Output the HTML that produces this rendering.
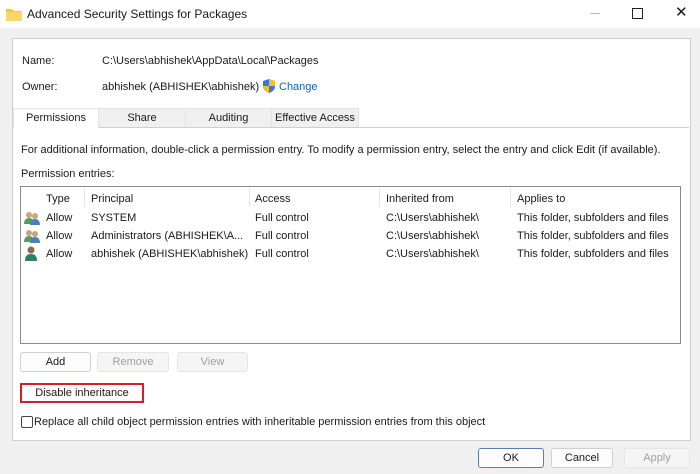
<!DOCTYPE html>
<html><head><style>
body{margin:0;width:700px;height:474px;background:#f0f0f0;font-family:"Liberation Sans",sans-serif;font-size:11px;color:#1a1a1a;position:relative;overflow:hidden}
.a{position:absolute;white-space:nowrap}
.btn{position:absolute;border:1px solid #d0d0d0;background:#fdfdfd;border-radius:3px;text-align:center;box-sizing:border-box;line-height:18px}
.dis{color:#a0a0a0;background:#f5f5f5;border-color:#e6e6e6}
.tab{position:absolute;top:108px;height:19px;line-height:19px;text-align:center;background:#f0f0f0;border:1px solid #e3e3e3;border-bottom:none;box-sizing:border-box}
</style></head><body>
<div class="a" style="left:0;top:0;width:700px;height:28px;background:#fff"></div>
<svg class="a" style="left:6px;top:7px" width="16" height="14"><path d="M0 2h6l2 2h8v10H0z" fill="#f4c443"/><path d="M0 5h16v9H0z" fill="#fcd66b"/></svg>
<div class="a" style="left:27px;top:7px;font-size:12px">Advanced Security Settings for Packages</div>
<div class="a" style="left:590px;top:13px;width:10px;height:1px;background:#bbb"></div>
<div class="a" style="left:632px;top:8px;width:9px;height:9px;border:1px solid #222"></div>
<div class="a" style="left:675px;top:3px;font-size:15px">✕</div>
<div class="a" style="left:12px;top:38px;width:677px;height:401px;background:#fff;border:1px solid #cfcfcf"></div>
<div class="a" style="left:22px;top:55px">Name:</div>
<div class="a" style="left:102px;top:55px">C:\Users\abhishek\AppData\Local\Packages</div>
<div class="a" style="left:22px;top:81px">Owner:</div>
<div class="a" style="left:102px;top:81px">abhishek (ABHISHEK\abhishek)</div>
<svg class="a" style="left:262px;top:79px" width="14" height="14"><path d="M7 0L13 2V7C13 11 10 13 7 14C4 13 1 11 1 7V2Z" fill="#3a78d4"/><path d="M7 0L13 2V7H7ZM1 7H7V14C4 13 1 11 1 7Z" fill="#f2c12e"/></svg>
<div class="a" style="left:279px;top:81px;color:#1a5fb4">Change</div>
<div class="a" style="left:13px;top:127px;width:676px;height:1px;background:#cfcfcf"></div>
<div class="tab" style="left:13px;width:86px;background:#fff;height:20px">Permissions</div>
<div class="tab" style="left:98px;width:88px">Share</div>
<div class="tab" style="left:185px;width:87px">Auditing</div>
<div class="tab" style="left:271px;width:88px">Effective Access</div>
<div class="a" style="left:21px;top:144px">For additional information, double-click a permission entry. To modify a permission entry, select the entry and click Edit (if available).</div>
<div class="a" style="left:21px;top:168px">Permission entries:</div>
<div class="a" style="left:20px;top:186px;width:659px;height:156px;border:1px solid #8a8a8a;background:#fff"></div>
<div class="a" style="left:84px;top:188px;width:1px;height:19px;background:#e5e5e5"></div>
<div class="a" style="left:249px;top:188px;width:1px;height:19px;background:#e5e5e5"></div>
<div class="a" style="left:379px;top:188px;width:1px;height:19px;background:#e5e5e5"></div>
<div class="a" style="left:510px;top:188px;width:1px;height:19px;background:#e5e5e5"></div>
<div class="a" style="left:46px;top:193px">Type</div>
<div class="a" style="left:91px;top:193px">Principal</div>
<div class="a" style="left:255px;top:193px">Access</div>
<div class="a" style="left:386px;top:193px">Inherited from</div>
<div class="a" style="left:517px;top:193px">Applies to</div>
<svg class="a" style="left:24px;top:211px" width="16" height="14"><circle cx="5" cy="4" r="3" fill="#c9a57a"/><path d="M0 13c0-4 2-6 5-6s5 2 5 6z" fill="#5a9a5a"/><circle cx="11" cy="5" r="3" fill="#c9a57a"/><path d="M6 14c0-4 2-6 5-6s5 2 5 6z" fill="#4a7fc0"/></svg>
<svg class="a" style="left:24px;top:229px" width="16" height="14"><circle cx="5" cy="4" r="3" fill="#c9a57a"/><path d="M0 13c0-4 2-6 5-6s5 2 5 6z" fill="#5a9a5a"/><circle cx="11" cy="5" r="3" fill="#c9a57a"/><path d="M6 14c0-4 2-6 5-6s5 2 5 6z" fill="#4a7fc0"/></svg>
<svg class="a" style="left:25px;top:246px" width="12" height="15"><circle cx="6" cy="4" r="3.5" fill="#8a6a4a"/><path d="M0 15c0-5 2-7 6-7s6 2 6 7z" fill="#2f7f6f"/></svg>
<div class="a" style="left:46px;top:212px">Allow</div><div class="a" style="left:91px;top:212px">SYSTEM</div><div class="a" style="left:255px;top:212px">Full control</div><div class="a" style="left:386px;top:212px">C:\Users\abhishek\</div><div class="a" style="left:517px;top:212px">This folder, subfolders and files</div>
<div class="a" style="left:46px;top:230px">Allow</div><div class="a" style="left:91px;top:230px">Administrators (ABHISHEK\A...</div><div class="a" style="left:255px;top:230px">Full control</div><div class="a" style="left:386px;top:230px">C:\Users\abhishek\</div><div class="a" style="left:517px;top:230px">This folder, subfolders and files</div>
<div class="a" style="left:46px;top:248px">Allow</div><div class="a" style="left:91px;top:248px">abhishek (ABHISHEK\abhishek)</div><div class="a" style="left:255px;top:248px">Full control</div><div class="a" style="left:386px;top:248px">C:\Users\abhishek\</div><div class="a" style="left:517px;top:248px">This folder, subfolders and files</div>
<div class="btn" style="left:20px;top:352px;width:71px;height:20px">Add</div>
<div class="btn dis" style="left:97px;top:352px;width:72px;height:20px">Remove</div>
<div class="btn dis" style="left:177px;top:352px;width:71px;height:20px">View</div>
<div class="btn" style="left:20px;top:383px;width:124px;height:20px;border:2px solid #d0202a;border-radius:0;line-height:17px">Disable inheritance</div>
<div class="a" style="left:21px;top:416px;width:10px;height:10px;border:1px solid #444;border-radius:2px"></div>
<div class="a" style="left:34px;top:416px">Replace all child object permission entries with inheritable permission entries from this object</div>
<div class="btn" style="left:478px;top:448px;width:66px;height:20px;border-color:#5a7fa8">OK</div>
<div class="btn" style="left:551px;top:448px;width:62px;height:20px">Cancel</div>
<div class="btn dis" style="left:624px;top:448px;width:66px;height:20px">Apply</div>
</body></html>
